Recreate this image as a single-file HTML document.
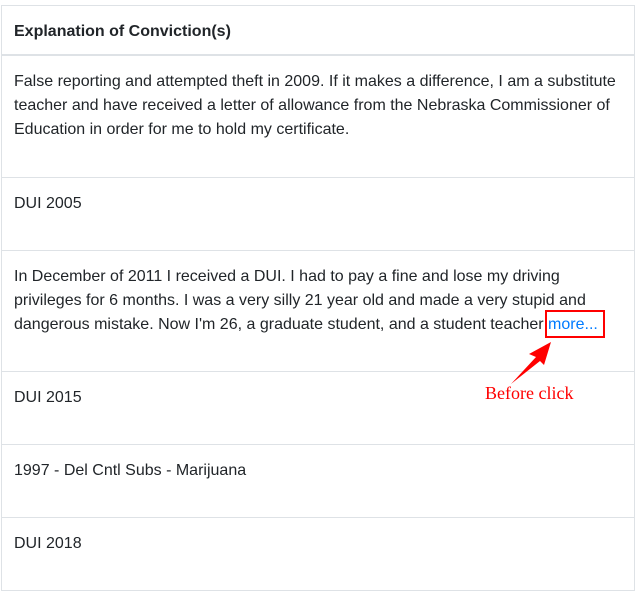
<html><head><style>
body{margin:0;background:#fff;font-family:"Liberation Sans",sans-serif;font-size:16px;color:#212529;}
.t{position:absolute;left:1px;top:5px;width:632px;border:1px solid #dee2e6;border-bottom:none;}
.r{border-bottom:1px solid #dee2e6;padding:14px 12px 10px;line-height:24px;box-sizing:border-box;}
.h{height:50px;font-weight:bold;border-bottom:2px solid #dee2e6;padding-top:14px}
a{color:#007bff;text-decoration:none}
</style></head><body>
<div class="t">
<div class="r h">Explanation of Conviction(s)</div>
<div class="r" style="height:122px">False reporting and attempted theft in 2009. If it makes a difference, I am a substitute teacher and have received a letter of allowance from the Nebraska Commissioner of Education in order for me to hold my certificate.</div>
<div class="r" style="height:73px">DUI 2005</div>
<div class="r" style="height:121px">In December of 2011 I received a DUI. I had to pay a fine and lose my driving privileges for 6 months. I was a very silly 21 year old and made a very stupid and dangerous mistake. Now I'm 26, a graduate student, and a student teacher <a>more...</a></div>
<div class="r" style="height:73px">DUI 2015</div>
<div class="r" style="height:73px">1997 - Del Cntl Subs - Marijuana</div>
<div class="r" style="height:73px">DUI 2018</div>
</div>
<div style="position:absolute;left:545px;top:310px;width:56px;height:24px;border:2px solid #f00"></div>
<svg style="position:absolute;left:0;top:0" width="637" height="594"><polygon points="551,342 529,354 536,357 511,384 540,361 544,365" fill="#f00"/></svg>
<div style="position:absolute;left:485px;top:383px;font-family:'Liberation Serif',serif;font-size:18px;color:#f00">Before click</div>
</body></html>
